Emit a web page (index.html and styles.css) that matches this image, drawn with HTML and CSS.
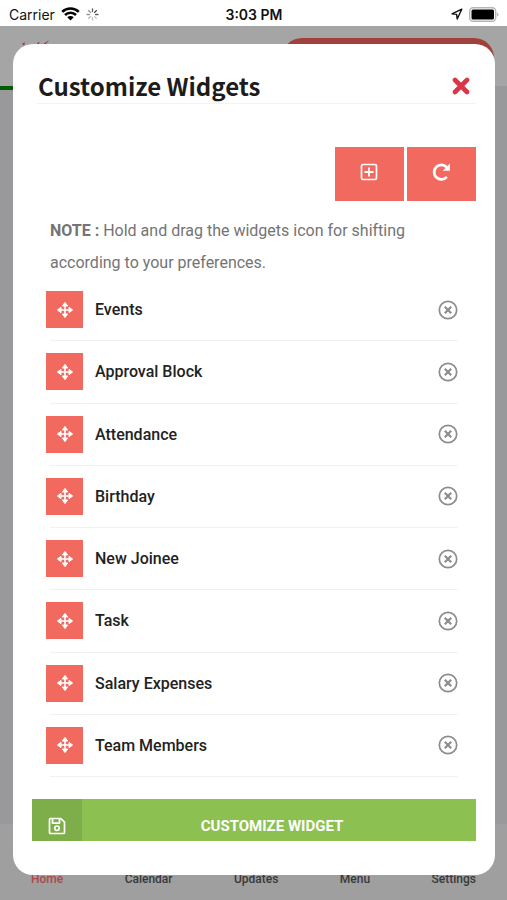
FILE: index.html
```html
<!DOCTYPE html>
<html lang="en">
<head>
<meta charset="utf-8">
<meta name="viewport" content="width=device-width, initial-scale=1">
<title>Customize Widgets</title>
<link rel="stylesheet" href="styles.css">
</head>
<body>
<svg class="sprite" aria-hidden="true">
  <symbol id="move" viewBox="0 0 16 16">
    <path d="M8 2v12M2 8h12" stroke="currentColor" stroke-width="1.6"/>
    <path d="M8 .4l2.700 3.600H5.300zM8 15.600l2.700-3.600H5.300zM.4 8l3.600-2.700v5.400zM15.600 8l-3.600-2.700v5.400z" fill="currentColor" stroke="currentColor" stroke-width="1" stroke-linejoin="round"/>
  </symbol>
  <symbol id="remove" viewBox="0 0 20 20">
    <circle cx="10" cy="10" r="8.7" fill="none" stroke="currentColor" stroke-width="1.7"/>
    <path d="M6.8 6.8l6.4 6.4M13.2 6.8l-6.4 6.4" stroke="currentColor" stroke-width="2.200"/>
  </symbol>
</svg>

<div class="status">
  <div class="status-left">
    <span>Carrier</span>
    <svg width="19" height="14" viewBox="0 0 19 14" aria-hidden="true">
      <path d="M1.2 4.8a12 12 0 0 1 16.6 0M4 8a8 8 0 0 1 11 0" fill="none" stroke="#000" stroke-width="2.5"/>
      <path d="M9.500 13.500L6.300 10.200a4.600 4.600 0 0 1 6.400 0z"/>
    </svg>
    <svg width="13" height="13" viewBox="0 0 13 13" fill="none" stroke="#333" stroke-width="1.300" stroke-linecap="round" aria-hidden="true">
      <path d="M6.500 1v2.500" opacity=".8"/><path d="M10.400 2.600L8.600 4.400"/><path d="M12 6.500H9.500" opacity=".8"/><path d="M10.400 10.400L8.600 8.600" opacity=".3"/><path d="M6.500 12V9.500" opacity=".3"/><path d="M2.600 10.400l1.800-1.800" opacity=".4"/><path d="M1 6.500h2.500" opacity=".5"/><path d="M2.600 2.600l1.800 1.800" opacity=".6"/>
    </svg>
  </div>
  <div class="status-time">3:03 PM</div>
  <div class="status-right">
    <svg width="12" height="12" viewBox="0 0 12 12" aria-hidden="true"><path d="M10.800 1.200L1 5.800l4.600.6.6 4.600z" fill="none" stroke="#111" stroke-width="1.400" stroke-linejoin="round"/></svg>
    <svg width="30" height="15" viewBox="0 0 30 15" aria-hidden="true"><rect x=".7" y=".7" width="26" height="13.600" rx="3.500" fill="#fff" stroke="#b5b5b5" stroke-width="1.400"/><rect x="2.500" y="2.500" width="22.500" height="10" rx="1.500"/><path d="M28 5.500c2 .8 2 3.200 0 4z" fill="#b5b5b5"/></svg>
  </div>
</div>

<div class="screen">
  <div class="app" aria-hidden="true">
    <div class="app-header">
      <svg width="30" height="22" viewBox="0 0 30 22"><path d="M20 7l7-5-4 5zM0 5.500l3-1-1 3zM15 5l3-1-2 3z" fill="#a03038"/></svg>
      <div class="app-pill"></div>
    </div>
    <div class="app-line"></div>
    <div class="app-body"></div>
    <nav class="tabs">
      <span class="tab active">Home</span>
      <span class="tab">Calendar</span>
      <span class="tab">Updates</span>
      <span class="tab">Menu</span>
      <span class="tab">Settings</span>
    </nav>
  </div>

  <div class="modal" role="dialog" aria-modal="true" aria-labelledby="title">
    <header class="modal-header">
      <h1 id="title">Customize Widgets</h1>
      <button class="close" type="button" aria-label="Close">
        <svg width="18" height="18" viewBox="0 0 18 18"><path d="M3 3l12 12M15 3L3 15" stroke="currentColor" stroke-width="4.600" stroke-linecap="round"/></svg>
      </button>
    </header>

    <div class="toolbar">
      <button class="tool" type="button" aria-label="Add widget">
        <svg width="18" height="18" viewBox="0 0 18 18" fill="none" stroke="currentColor"><rect x="1.500" y="1.500" width="15" height="15" rx="1.500" stroke-width="1.700"/><path d="M9 4.500v9M4.500 9h9" stroke-width="1.800"/></svg>
      </button>
      <button class="tool" type="button" aria-label="Reset">
        <svg width="20" height="18" viewBox="0 0 20 18"><path d="M15.800 13.800A7.200 7.200 0 1 1 15.600 4.200" fill="none" stroke="currentColor" stroke-width="2.800"/><path d="M18.900.6v7.200h-7.200z" fill="currentColor"/></svg>
      </button>
    </div>

    <p class="note"><strong>NOTE :</strong> Hold and drag the widgets icon for shifting according to your preferences.</p>

    <ul class="widgets">
      <li class="widget"><button class="drag" type="button" aria-label="Move Events"><svg><use href="#move"/></svg></button><span class="name">Events</span><button class="remove" type="button" aria-label="Remove Events"><svg><use href="#remove"/></svg></button></li>
      <li class="widget"><button class="drag" type="button" aria-label="Move Approval Block"><svg><use href="#move"/></svg></button><span class="name">Approval Block</span><button class="remove" type="button" aria-label="Remove Approval Block"><svg><use href="#remove"/></svg></button></li>
      <li class="widget"><button class="drag" type="button" aria-label="Move Attendance"><svg><use href="#move"/></svg></button><span class="name">Attendance</span><button class="remove" type="button" aria-label="Remove Attendance"><svg><use href="#remove"/></svg></button></li>
      <li class="widget"><button class="drag" type="button" aria-label="Move Birthday"><svg><use href="#move"/></svg></button><span class="name">Birthday</span><button class="remove" type="button" aria-label="Remove Birthday"><svg><use href="#remove"/></svg></button></li>
      <li class="widget"><button class="drag" type="button" aria-label="Move New Joinee"><svg><use href="#move"/></svg></button><span class="name">New Joinee</span><button class="remove" type="button" aria-label="Remove New Joinee"><svg><use href="#remove"/></svg></button></li>
      <li class="widget"><button class="drag" type="button" aria-label="Move Task"><svg><use href="#move"/></svg></button><span class="name">Task</span><button class="remove" type="button" aria-label="Remove Task"><svg><use href="#remove"/></svg></button></li>
      <li class="widget"><button class="drag" type="button" aria-label="Move Salary Expenses"><svg><use href="#move"/></svg></button><span class="name">Salary Expenses</span><button class="remove" type="button" aria-label="Remove Salary Expenses"><svg><use href="#remove"/></svg></button></li>
      <li class="widget"><button class="drag" type="button" aria-label="Move Team Members"><svg><use href="#move"/></svg></button><span class="name">Team Members</span><button class="remove" type="button" aria-label="Remove Team Members"><svg><use href="#remove"/></svg></button></li>
    </ul>

    <button class="save" type="button">
      <span class="save-icon">
        <svg width="18" height="18" viewBox="0 0 18 18" fill="none" stroke="currentColor" stroke-width="1.700" stroke-linejoin="round"><path d="M2.500 1.500h10.300l3.700 3.700v10.300a1 1 0 0 1-1 1h-13a1 1 0 0 1-1-1v-13a1 1 0 0 1 1-1zM4.500 1.500v4.700h7V1.500"/><circle cx="9" cy="11.200" r="2.200"/></svg>
      </span>
      <span class="save-label">CUSTOMIZE WIDGET</span>
    </button>
  </div>
</div>
</body>
</html>
```
FILE: styles.css
```css
* {
  box-sizing: border-box;
}

body {
  margin: 0;
  min-height: 100vh;
  display: flex;
  flex-direction: column;
  font-family: Roboto, sans-serif;
  font-size: 16px;
  background: #fff;
}

button {
  border: 0;
  padding: 0;
  margin: 0;
  background: none;
  font: inherit;
  color: inherit;
}

svg {
  display: block;
}

.sprite {
  position: absolute;
  width: 0;
  height: 0;
}

.status {
  display: grid;
  grid-template-columns: 1fr auto 1fr;
  align-items: center;
  height: 26px;
  padding: 2px 8px 0 9px;
  font-family: Inter, sans-serif;
  font-size: 14px;
  color: #111;
}

.status-left,
.status-right {
  display: flex;
  align-items: center;
  gap: 6px;
}

.status-right {
  justify-content: flex-end;
}

.status-time {
  font-weight: 600;
}

.screen {
  flex: 1;
  display: grid;
}

.app,
.modal {
  grid-area: 1 / 1;
  display: flex;
  flex-direction: column;
}

.app {
  background: #99999b;
}

.app-header {
  display: flex;
  justify-content: space-between;
  height: 60px;
  padding: 12px 13px 0 22px;
  background: #a5a5a5;
}

.app-pill {
  width: 45%;
  height: 40px;
  border-radius: 20px;
  background: #a0413b;
}

.app-line {
  width: 50%;
  height: 4px;
  background: #005c00;
}

.app-body {
  flex: 1;
}

.tabs {
  display: flex;
  justify-content: space-between;
  align-items: flex-end;
  height: 76px;
  padding: 0 31px 14px;
  background: #9f9f9f;
  font-size: 12px;
  font-weight: 500;
  line-height: 14px;
  color: #3a3a3a;
}

.tab.active {
  color: #ae4a47;
}

.modal {
  z-index: 1;
  margin: 18px 12px 25px 13px;
  padding: 24px 19px 34px;
  border-radius: 20px;
  background: #fff;
}

.modal-header {
  display: flex;
  justify-content: space-between;
  align-items: center;
  height: 36px;
  margin: 0 0 0 5px;
  padding: 0 6px 0 1px;
  border-bottom: 1px solid #f3f3f3;
}

h1 {
  margin: 0;
  font-family: "Noto Sans CJK JP", sans-serif;
  font-size: 24px;
  font-weight: 700;
  line-height: 36px;
  color: #1c1c1c;
}

.close {
  color: #dc3548;
}

.toolbar {
  display: flex;
  justify-content: flex-end;
  gap: 3px;
  margin-top: 43px;
}

.tool {
  display: grid;
  place-items: center;
  width: 69px;
  height: 54px;
  padding: 0 1px 4px 0;
  background: #f1695f;
  color: #fff;
}

.note {
  margin: 14px 18px 0;
  line-height: 32px;
  color: #747474;
}

.note strong {
  font-weight: 700;
}

.widgets {
  flex: 1;
  display: grid;
  grid-auto-rows: 1fr;
  margin: 0 18px;
  padding: 0;
  list-style: none;
}

.widget {
  display: flex;
  align-items: center;
  border-bottom: 1px solid #f0f0f0;
}

.drag {
  display: grid;
  place-items: center;
  width: 37px;
  height: 37px;
  margin-left: -4px;
  background: #f1695f;
  color: #fff;
}

.drag svg {
  width: 16px;
  height: 16px;
}

.name {
  flex: 1;
  margin-left: 12px;
  font-weight: 500;
  color: #222;
}

.remove {
  color: #8c8c8c;
}

.remove svg {
  width: 20px;
  height: 20px;
}

.save {
  display: flex;
  height: 42px;
  margin-top: 22px;
  background: #8cc152;
  color: #fff;
}

.save-icon,
.save-label {
  display: grid;
  place-items: center;
  height: 100%;
  padding-top: 12px;
}

.save-icon {
  width: 50px;
  background: #7dae49;
}

.save-label {
  flex: 1;
  padding-right: 14px;
  font-size: 15px;
  font-weight: 700;
}
```
